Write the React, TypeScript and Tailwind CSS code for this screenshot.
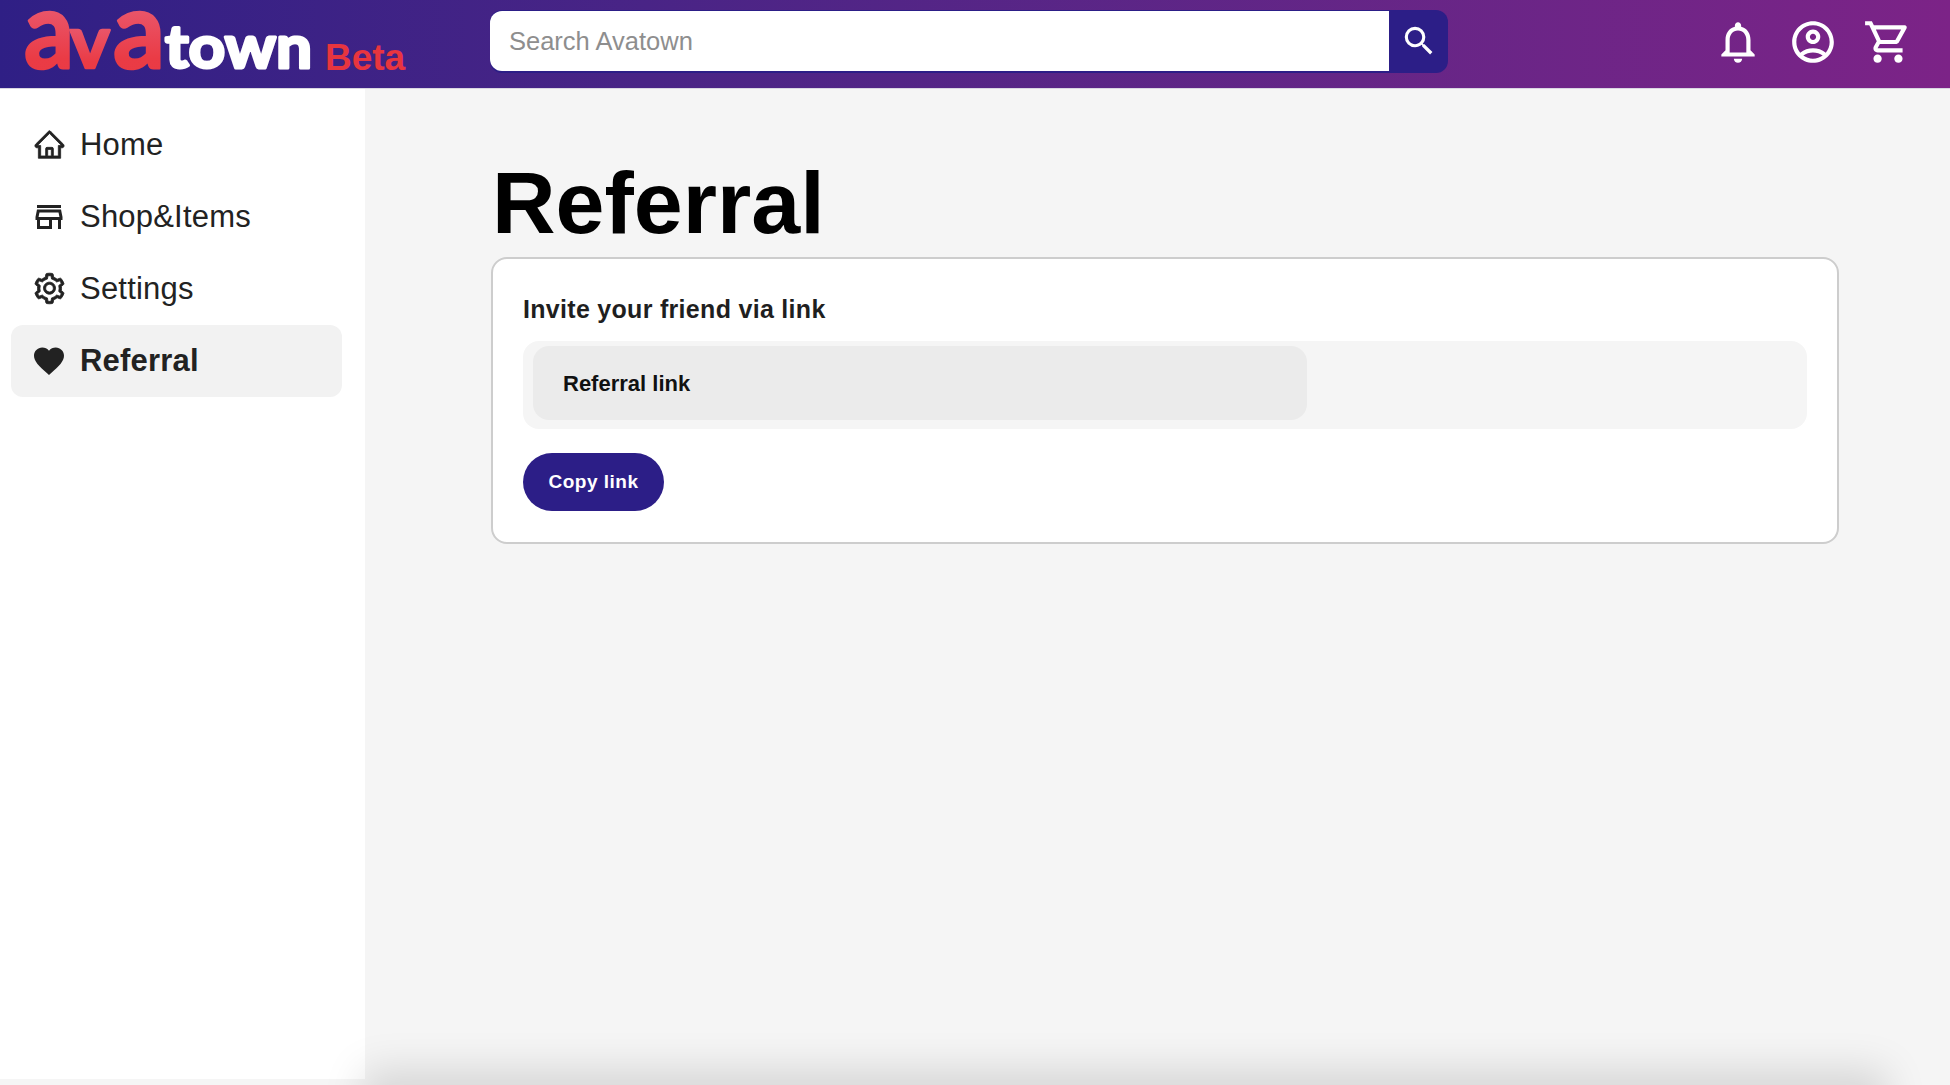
import { AiOutlineHome, AiOutlineSetting } from "react-icons/ai";
import {
  MdFavorite,
  MdOutlineAccountCircle,
  MdOutlineNotifications,
  MdOutlineSearch,
  MdOutlineShoppingCart,
  MdOutlineStore,
} from "react-icons/md";

const font = "font-['Liberation_Sans',Arial,sans-serif]";

function Logo() {
  const red = {
    fontFamily: "Lato, sans-serif",
    fontWeight: 700,
    fill: "url(#ava)",
    stroke: "url(#ava)",
    strokeWidth: 2.5,
    strokeLinejoin: "round" as const,
    lengthAdjust: "spacingAndGlyphs" as const,
  };
  return (
    <svg width="300" height="72" viewBox="0 0 300 72" className="shrink-0">
      <defs>
        <linearGradient id="ava" x1="0" y1="0" x2="0" y2="1">
          <stop offset="0" stopColor="#e9708f" />
          <stop offset="0.75" stopColor="#ea3b45" />
          <stop offset="1" stopColor="#e93a44" />
        </linearGradient>
      </defs>
      <text x="3" y="60" fontSize="108" textLength="50" {...red}>a</text>
      <text x="49" y="60" fontSize="74" textLength="40" {...red}>v</text>
      <text x="92" y="60" fontSize="108" textLength="52" {...red}>a</text>
      <text
        x="144"
        y="60"
        fontFamily="Lato, sans-serif"
        fontWeight="700"
        fontSize="60"
        textLength="147"
        lengthAdjust="spacingAndGlyphs"
        fill="#fff"
        stroke="#fff"
        strokeWidth="3"
        strokeLinejoin="round"
      >
        town
      </text>
    </svg>
  );
}

function Header() {
  return (
    <header className="flex h-[89px] items-center border-b border-[#d9d6e2] bg-gradient-to-r from-[#2f1f85] to-[#7c2387] pl-[21px] pr-[37px]">
      <div className="flex w-[469px] items-end">
        <Logo />
        <span className="mb-[2px] ml-[4px] text-[37px] leading-[40px] font-bold text-[#e8353f]">Beta</span>
      </div>
      <div className="mb-[6px] flex h-[63px] w-[958px] items-center rounded-xl bg-[#2c1e87]">
        <div className="flex h-[60px] w-[899px] items-center rounded-l-xl bg-white pl-[19px] text-[25.5px] text-[#8e8e8e]">
          Search Avatown
        </div>
        <div className="flex flex-1 items-center justify-center">
          <MdOutlineSearch className="text-white" size={38} />
        </div>
      </div>
      <div className="mb-[5px] ml-auto flex items-center gap-[25px] text-white">
        <MdOutlineNotifications size={50} />
        <MdOutlineAccountCircle size={50} />
        <MdOutlineShoppingCart size={50} />
      </div>
    </header>
  );
}

function NavItem({ icon, label, active }: { icon: React.ReactNode; label: string; active?: boolean }) {
  return (
    <div className={`flex h-[72px] items-center gap-[13px] rounded-xl pl-[20px] text-[31px] tracking-[0.2px] text-[#222] ${active ? "bg-[#f2f2f2] font-bold" : ""}`}>
      <span className="flex w-[36px] justify-center">{icon}</span>
      {label}
    </div>
  );
}

function Sidebar() {
  return (
    <aside className="h-[990px] w-[365px] shrink-0 bg-white pl-[11px] pr-[23px] pt-[20px]">
      <NavItem icon={<AiOutlineHome className="-mt-px" size={33} strokeWidth={24} />} label="Home" />
      <NavItem icon={<MdOutlineStore size={36} />} label="Shop&Items" />
      <NavItem icon={<AiOutlineSetting className="-mt-px" size={35} strokeWidth={24} />} label="Settings" />
      <NavItem icon={<MdFavorite size={38} />} label="Referral" active />
    </aside>
  );
}

export default function App() {
  return (
    <div className={`relative h-[1085px] w-full overflow-hidden bg-[#f5f5f5] ${font}`}>
      <Header />
      <div className="flex">
        <Sidebar />
        <main className="flex-1 pl-[126px] pr-[111px] pt-[59px]">
          <h1 className="ml-px text-[88px] leading-[109px] font-bold text-black">Referral</h1>
          <section className="h-[287px] rounded-2xl border-2 border-[#cdcdcd] bg-white px-[30px] pt-[32px]">
            <h2 className="text-[25px] leading-[36px] font-bold tracking-[0.3px] text-[#1f1f1f]">Invite your friend via link</h2>
            <div className="mt-[14px] h-[88px] rounded-2xl bg-[#f5f5f5] py-[5px] pl-[10px]">
              <div className="flex h-[74px] w-[774px] items-center rounded-2xl bg-[#ebebeb] pl-[30px] text-[22px] font-bold text-[#111]">
                Referral link
              </div>
            </div>
            <button className="mt-[24px] h-[58px] w-[141px] rounded-full bg-[#2c1e87] text-[19px] font-bold tracking-[0.5px] text-white">
              Copy link
            </button>
          </section>
        </main>
      </div>
      <div className="absolute left-[385px] top-[1092px] h-[20px] w-[1480px] shadow-[0_0_40px_22px_rgba(0,0,0,0.13)]" />
    </div>
  );
}
